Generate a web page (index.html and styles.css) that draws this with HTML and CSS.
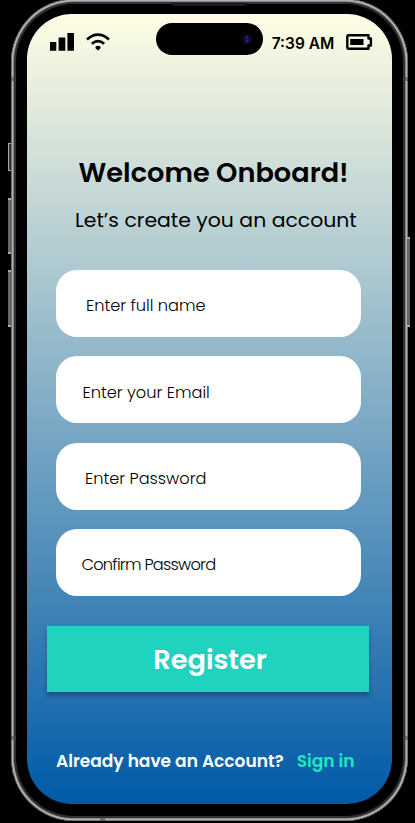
FILE: index.html
```html
<!DOCTYPE html>
<html lang="en">
<head>
<meta charset="utf-8">
<title>Register</title>
<link rel="stylesheet" href="styles.css">
</head>
<body>
<div class="phone">
  <i class="key key-mute"></i>
  <i class="key key-up"></i>
  <i class="key key-down"></i>
  <i class="key key-power"></i>
  <i class="band band-tl"></i>
  <i class="band band-tr"></i>
  <i class="band band-bl"></i>
  <i class="band band-br"></i>
  <i class="band band-foot"></i>
  <i class="speaker"></i>
  <main class="screen">
    <header class="status">
      <svg class="signal" width="25" height="18" viewBox="0 0 25 18"><path d="M0 9h6.3v8.7H0zM8.6 4.4h6.7v13.3H8.6zM17.4 0H24v17.7h-6.6z"/></svg>
      <svg class="wifi" width="24" height="18" viewBox="0 0 24 18"><path d="M1 6.4Q12-3.2 23 6.4M5.800 10.700Q12 5.600 18.200 10.700" fill="none" stroke="#000" stroke-width="2.700"/><path d="M12 17.600 9.500 15.200V13.700Q12 12 14.500 13.700V15.200z"/></svg>
      <div class="island">
        <svg width="16" height="16" viewBox="0 0 16 16"><circle cx="8" cy="8" r="7.500" fill="#06060a"/><circle cx="8" cy="8" r="4.200" fill="#0b0e2e"/><circle cx="8" cy="6" r="1.500" fill="#20296b"/><circle cx="8" cy="9.800" r="1.500" fill="#20296b"/></svg>
      </div>
      <time class="clock">7:39 AM</time>
      <svg class="battery" width="27" height="16" viewBox="0 0 27 16"><path d="M2.500 1.200h20v3.300h2.400v7h-2.400v3.300h-20q-1.200 0-1.200-1.200V2.400q0-1.200 1.200-1.200z" fill="none" stroke="#000" stroke-width="2.400" stroke-linejoin="round"/><path d="M4.200 5h13.300v6H4.200z"/></svg>
    </header>
    <h1 class="title">Welcome Onboard!</h1>
    <p class="subtitle">Let’s create you an account</p>
    <form class="fields">
      <label class="field field-name">Enter full name</label>
      <label class="field field-email">Enter your Email</label>
      <label class="field field-password">Enter Password</label>
      <label class="field field-confirm">Confirm Password</label>
    </form>
    <button class="register">Register</button>
    <footer class="signin"><span>Already have an Account?</span><a class="link">Sign in</a></footer>
  </main>
</div>
</body>
</html>
```
FILE: styles.css
```css
* { box-sizing: border-box; }

body {
  margin: 0;
  height: 823px;
  overflow: hidden;
  background: #000;
  font-family: Poppins, Inter, sans-serif;
  color: #000;
}

.phone {
  position: relative;
  width: 397px;
  height: 821.500px;
  margin: -1px 0 0 11px;
  padding: 15px 16px 0;
  border-radius: 63px;
  background: #000;
  box-shadow: inset 0 0 0 .600px #444, inset 0 0 0 2.400px #b0b0b0, inset 0 0 0 3px #666, inset 0 0 0 5px #342f30;
}

.key {
  position: absolute;
  width: 3px;
  background: #666;
  border: solid #aaa;
  border-width: 2px 0;
}
.key-mute { left: -3px; top: 144px; height: 28px; border-width: 1px 0 1px 1px; background: #333; }
.key-up { left: -3px; top: 199px; height: 56px; }
.key-down { left: -3px; top: 271px; height: 57px; }
.key-power { right: -2px; top: 238px; height: 90px; }

.band { position: absolute; width: 5px; height: 4px; background: #4448; }
.band-tl { left: 0; top: 78px; }
.band-tr { right: 0; top: 78px; }
.band-bl { left: 0; bottom: 81px; }
.band-br { right: 0; bottom: 81px; }
.band-foot { left: 89px; bottom: 0; }

.speaker {
  position: absolute;
  left: 161px;
  top: 4px;
  width: 75px;
  height: 3px;
  border-radius: 0 0 3px 3px;
  background: #1b1b1b;
}

.screen {
  display: flex;
  flex-direction: column;
  width: 365px;
  height: 790px;
  overflow: hidden;
  border-radius: 45px;
  background: linear-gradient(#fffde4, #005aa7);
}

.status {
  display: flex;
  align-items: flex-start;
  height: 60px;
  padding: 0 0 0 22.500px;
}
.signal { margin-top: 19px; }
.wifi { margin: 19px 0 0 11.500px; }
.island {
  display: flex;
  align-items: center;
  justify-content: flex-end;
  width: 107px;
  height: 32px;
  margin: 8.500px 0 0 46px;
  padding-right: 8px;
  border-radius: 16px;
  background: #000;
}
.clock {
  width: 65px;
  margin: 20px 0 0 8.700px;
  font: 600 15.500px/20px Inter, sans-serif;
  white-space: nowrap;
}
.battery { margin: 19.500px 0 0 9.600px; }

.title {
  margin: 79px 0 0 51.500px;
  font-size: 27.200px;
  font-weight: 600;
  line-height: 40px;
}
.subtitle {
  margin: 13px 0 0 48px;
  font-size: 20.400px;
  line-height: 28px;
  white-space: nowrap;
}

.fields {
  display: grid;
  gap: 19.600px;
  margin: 35.600px 31px 0 29px;
}
.field {
  height: 67px;
  padding-top: 24.500px;
  border-radius: 21px;
  background: #fff;
  font-size: 16.200px;
  font-weight: 300;
  line-height: 24px;
}
.field-name { padding-left: 30px; }
.field-email { padding-left: 26.500px; }
.field-password { padding-left: 29px; }
.field-confirm { padding-top: 23.500px; padding-left: 25.500px; letter-spacing: -0.750px; }

.register {
  width: 322px;
  height: 66px;
  margin: 29.800px 0 0 20px;
  padding: 1px 0 0 4px;
  border: 0;
  background: #20d3bf;
  box-shadow: 0 4px 4px rgba(0, 0, 0, .25);
  color: #fff;
  font: 600 27.200px/65px Poppins, Inter, sans-serif;
}

.signin {
  display: flex;
  gap: 13px;
  margin: 56px 0 0 29px;
  color: #fff;
  font-size: 17px;
  font-weight: 600;
  line-height: 26px;
  white-space: nowrap;
}
.link { color: #20e8c4; }
```
